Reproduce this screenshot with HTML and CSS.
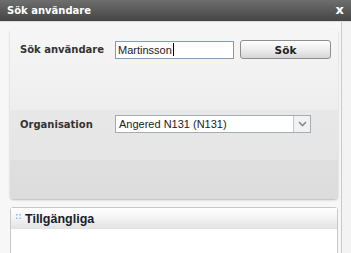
FILE: index.html
```html
<!DOCTYPE html>
<html lang="sv">
<head>
  <meta charset="UTF-8">
  <title>Sök användare</title>
  <link rel="stylesheet" href="styles.css">
</head>
<body>
  <div class="dialog">
    <div class="dialog-title">
      <span>Sök användare</span>
      <span class="close">x</span>
    </div>
    <div class="dialog-body">
      <div class="search-panel">
        <div class="row row-search">
          <label class="label">Sök användare</label>
          <div class="text-input">Martinsson<span class="caret"></span></div>
          <button class="btn">Sök</button>
        </div>
        <div class="row row-org">
          <label class="label">Organisation</label>
          <div class="select">
            <span class="select-value">Angered N131 (N131)</span>
            <span class="select-arrow">
              <svg width="9" height="6" viewBox="0 0 9 6"><path d="M1 1 L4.5 4.5 L8 1" fill="none" stroke="#8a8a8a" stroke-width="1.6"/></svg>
            </span>
          </div>
        </div>
      </div>
      <div class="list-panel">
        <div class="list-header">
          <svg class="grip" width="5" height="5" viewBox="0 0 5 5">
            <rect x="0" y="0" width="1.5" height="1.5" fill="#8fbbe3"/>
            <rect x="3.5" y="0" width="1.5" height="1.5" fill="#8fbbe3"/>
            <rect x="0" y="3.5" width="1.5" height="1.5" fill="#8fbbe3"/>
            <rect x="3.5" y="3.5" width="1.5" height="1.5" fill="#8fbbe3"/>
          </svg>
          <span>Tillgängliga</span>
        </div>
        <div class="list-body"></div>
      </div>
    </div>
  </div>
</body>
</html>
```

FILE: styles.css
```css
body {
  margin: 0;
  background-color: #f3f3f3;
  font-family: "DejaVu Sans", Verdana, sans-serif;
  font-size: 10px;
  color: #222;
  overflow: hidden;
}

.dialog {
  width: 351px;
  height: 253px;
}

.dialog-title {
  height: 21px;
  display: flex;
  align-items: center;
  justify-content: space-between;
  padding: 0 7px 0 7px;
  background: linear-gradient(#6e6e6e, #454545);
  border-bottom: 1px solid #dcdcdc;
  color: #fff;
  font-weight: bold;
  font-size: 10px;
}

.close {
  font-size: 13px;
  font-weight: bold;
  margin-top: -2px;
}

.dialog-body {
  width: 328px;
  height: 231px;
  padding: 7px 3px 0 10px;
  margin-right: 9px;
  border-right: 1px solid #c9c9c9;
  background-color: #f7f7f7;
}

.search-panel {
  height: 170px;
  box-sizing: border-box;
  padding: 11px 0 0 10px;
  border-radius: 4px;
  background: linear-gradient(#f6f6f6 0, #efeeee 81px, #e9e8e8 81px, #e6e5e5 131px, #dfdfdf 131px, #dcdcdc 170px);
  box-shadow: 0 1px 2px rgba(0, 0, 0, 0.25);
}

.row {
  display: flex;
  align-items: center;
}

.row-org {
  margin-top: 56px;
}

.label {
  width: 95px;
  font-weight: bold;
  color: #333;
}

.text-input {
  width: 115px;
  height: 16px;
  border: 1px solid #7f9db9;
  background-color: #fff;
  font-family: "Liberation Sans", Arial, sans-serif;
  font-size: 11px;
  line-height: 16px;
  padding-left: 2px;
  display: flex;
  align-items: center;
}

.caret {
  display: inline-block;
  width: 1px;
  height: 13px;
  background-color: #000;
  margin-left: 1px;
}

.btn {
  margin-left: 6px;
  width: 91px;
  height: 19px;
  border: 1px solid #8e8e8e;
  border-radius: 3px;
  background: linear-gradient(#ffffff, #e9e9e9 60%, #d6d6d6);
  font-family: "DejaVu Sans", Verdana, sans-serif;
  font-size: 10.5px;
  font-weight: bold;
  color: #222;
  padding: 0;
}

.select {
  width: 194px;
  height: 16px;
  border: 1px solid #a5acb2;
  background-color: #fff;
  display: flex;
  align-items: stretch;
}

.select-value {
  flex: 1;
  font-family: "Liberation Sans", Arial, sans-serif;
  font-size: 11px;
  line-height: 16px;
  padding-left: 3px;
  color: #222;
}

.select-arrow {
  width: 16px;
  border-left: 1px solid #c4c8cc;
  background-color: #f2f2f2;
  display: flex;
  align-items: center;
  justify-content: center;
}

.list-panel {
  margin-top: 8px;
  border: 1px solid #c8c8c8;
  border-radius: 3px 3px 0 0;
  background-color: #fff;
}

.list-header {
  height: 21px;
  display: flex;
  align-items: center;
  gap: 4px;
  padding-left: 5px;
  background: linear-gradient(#ffffff, #f3f3f3 50%, #e2e2e2);
  font-family: "Liberation Sans", Arial, sans-serif;
  font-size: 12.5px;
  font-weight: bold;
  color: #16212d;
}

.grip {
  margin-top: -4px;
}

.list-body {
  height: 30px;
  background-color: #fff;
}
```
